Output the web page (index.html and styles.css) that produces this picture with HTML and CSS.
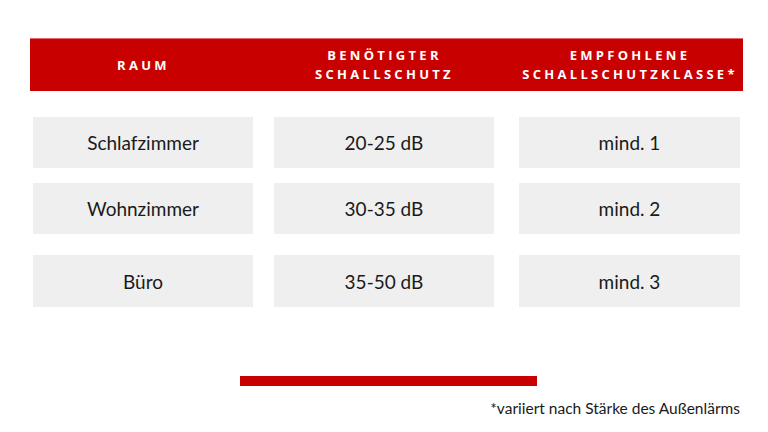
FILE: index.html
```html
<!DOCTYPE html>
<html lang="de">
<head>
<meta charset="utf-8">
<link rel="stylesheet" href="styles.css">
</head>
<body>
<div class="page">
  <div class="head">
    <div class="hcell">RAUM</div>
    <div class="hcell">BENÖTIGTER<br>SCHALLSCHUTZ</div>
    <div class="hcell">EMPFOHLENE<br>SCHALLSCHUTZKLASSE*</div>
  </div>
  <div class="row r1">
    <div class="cell">Schlafzimmer</div>
    <div class="cell">20-25 dB</div>
    <div class="cell">mind. 1</div>
  </div>
  <div class="row r2">
    <div class="cell">Wohnzimmer</div>
    <div class="cell">30-35 dB</div>
    <div class="cell">mind. 2</div>
  </div>
  <div class="row r3">
    <div class="cell">Büro</div>
    <div class="cell">35-50 dB</div>
    <div class="cell">mind. 3</div>
  </div>
  <div class="bar"></div>
  <div class="note">*variiert nach Stärke des Außenlärms</div>
</div>
</body>
</html>
```
FILE: styles.css
```css
html, body { margin: 0; padding: 0; background: #fff; }
body { width: 768px; height: 432px; overflow: hidden; font-family: "Lato", "Noto Sans", sans-serif; color: #222; }
.page { padding: 38px 0 0 30px; }
.head {
  width: 713px; height: 53px; box-sizing: border-box;
  background: #c80000; border-top: 1px solid #e46a6a;
  display: grid; padding: 0 3px; align-items: center;
  grid-template-columns: 220px 21px 220px 25px 221px;
}
.hcell { color: #fff; font-family: "Open Sans", sans-serif; font-weight: 700; font-size: 13px; letter-spacing: 3.3px; line-height: 19px; text-align: center; padding-left: 1px; }
.hcell:nth-child(2) { grid-column: 3; }
.hcell:nth-child(3) { grid-column: 5; }
.row { display: grid; padding-left: 3px; width: 710px; grid-template-columns: 220px 21px 220px 25px 221px; }
.row .cell:nth-child(2) { grid-column: 3; }
.row .cell:nth-child(3) { grid-column: 5; }
.r1 { margin-top: 26px; }
.r2 { margin-top: 15px; }
.r3 { margin-top: 21px; }
.cell { background: #efefef; height: 51px; display: flex; align-items: center; justify-content: center; font-size: 19px; font-weight: 400; color: #1a1a1a; }
.r3 .cell { height: 52px; }
.bar { width: 297px; height: 10px; background: #c80000; margin: 69px 0 0 210px; }
.note { width: 710px; text-align: right; font-size: 15.5px; font-weight: 400; color: #1a1a1a; margin-top: 13px; }
```
